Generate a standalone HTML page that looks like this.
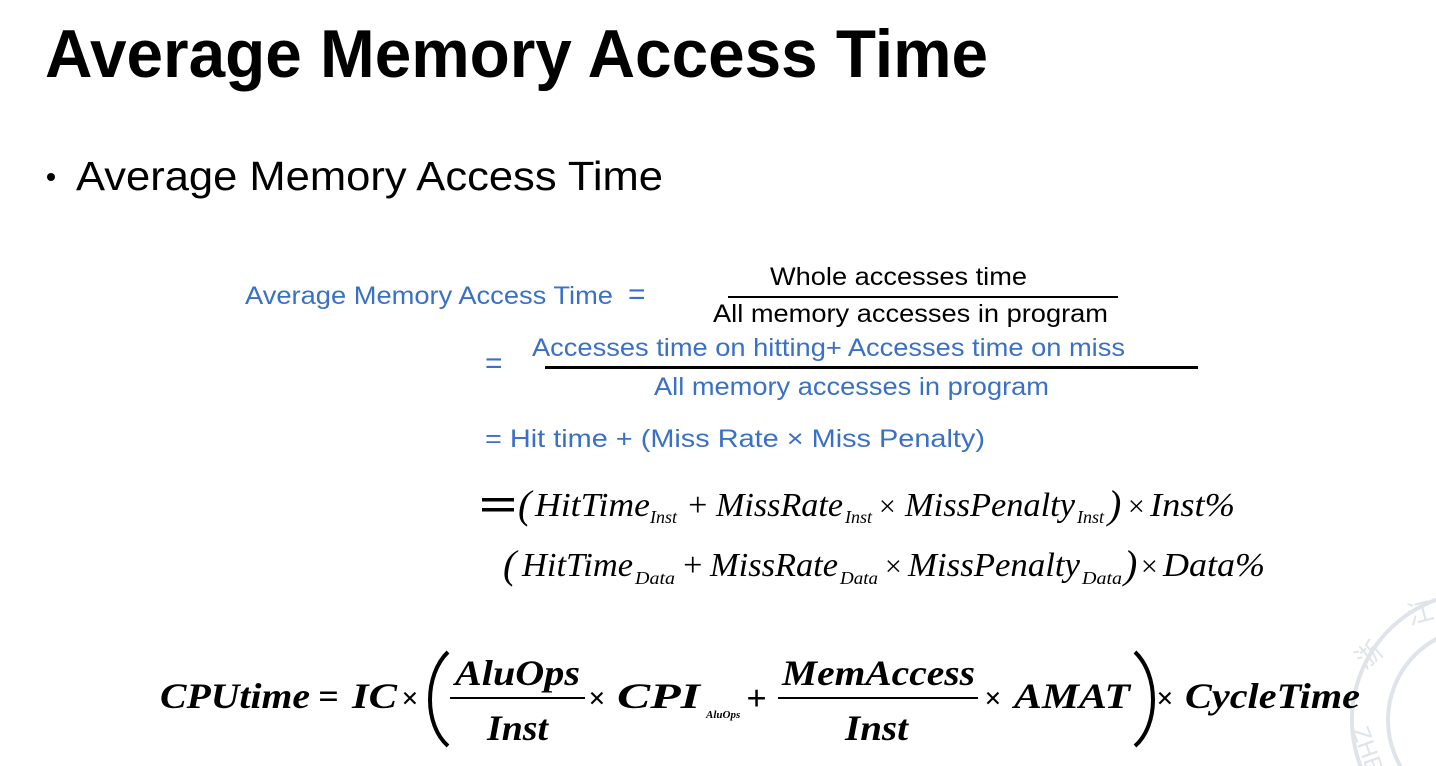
<!DOCTYPE html>
<html><head><meta charset="utf-8"><style>
html,body{margin:0;padding:0;background:#fff;width:1436px;height:766px;overflow:hidden}
svg{display:block}
.t{font-family:"Liberation Sans",sans-serif}
.b{fill:#3a70c6}
.m{font-family:"Liberation Serif",serif;font-style:italic}
.mb{font-family:"Liberation Serif",serif;font-style:italic;font-weight:bold}
</style></head><body>
<svg width="1436" height="766" viewBox="0 0 1436 766" xmlns="http://www.w3.org/2000/svg">
<g fill="none" stroke="#dfe3ea" stroke-width="4">
<circle cx="1480" cy="720" r="128"/>
<circle cx="1480" cy="720" r="92"/>
</g>
<g fill="#dfe3ea" font-family="Liberation Sans,sans-serif">
<text x="1365" y="670" font-size="26" transform="rotate(-40 1365 670)">浙</text>
<text x="1410" y="625" font-size="26" transform="rotate(-15 1410 625)">江</text>
<text x="1352" y="730" font-size="24" transform="rotate(70 1352 730)">ZHE</text>
</g>

<text class="t" x="45" y="77" font-size="68" font-weight="bold" textLength="943" lengthAdjust="spacingAndGlyphs">Average Memory Access Time</text>
<circle cx="51" cy="177" r="4" fill="#000"/>
<text class="t" x="76" y="190" font-size="41" textLength="587" lengthAdjust="spacingAndGlyphs">Average Memory Access Time</text>

<text class="t b" x="245" y="304" font-size="25" textLength="368" lengthAdjust="spacingAndGlyphs">Average Memory Access Time</text>
<text class="t b" x="628" y="304" font-size="30">=</text>
<text class="t" x="770" y="285" font-size="25" textLength="257" lengthAdjust="spacingAndGlyphs">Whole accesses time</text>
<rect x="728" y="296" width="390" height="2" fill="#000"/>
<text class="t" x="713" y="322" font-size="25" textLength="395" lengthAdjust="spacingAndGlyphs">All memory accesses in program</text>

<text class="t b" x="485" y="373" font-size="30">=</text>
<text class="t b" x="532" y="356" font-size="25" textLength="593" lengthAdjust="spacingAndGlyphs">Accesses time on hitting+ Accesses time on miss</text>
<rect x="545" y="366" width="653" height="3" fill="#000"/>
<text class="t b" x="654" y="395" font-size="25" textLength="395" lengthAdjust="spacingAndGlyphs">All memory accesses in program</text>

<text class="t b" x="485" y="447" font-size="25" textLength="500" lengthAdjust="spacingAndGlyphs">= Hit time + (Miss Rate × Miss Penalty)</text>

<rect x="482" y="498" width="32" height="3.5" fill="#000"/>
<rect x="482" y="508" width="32" height="3.5" fill="#000"/>
<g font-size="34">
<text class="m" x="518" y="518" font-style="normal" font-size="40">(</text>
<text class="m" x="535" y="516" textLength="115" lengthAdjust="spacingAndGlyphs">HitTime</text>
<text class="m" x="650" y="523" font-size="18">Inst</text>
<text class="m" x="686" y="516" font-style="normal">+</text>
<text class="m" x="716" y="516" textLength="127" lengthAdjust="spacingAndGlyphs">MissRate</text>
<text class="m" x="845" y="523" font-size="18">Inst</text>
<text class="m" x="877" y="516" font-style="normal" font-size="30">×</text>
<text class="m" x="905" y="516" textLength="170" lengthAdjust="spacingAndGlyphs">MissPenalty</text>
<text class="m" x="1077" y="523" font-size="18">Inst</text>
<text class="m" x="1108" y="518" font-style="normal" font-size="40">)</text>
<text class="m" x="1126" y="516" font-style="normal" font-size="30">×</text>
<text class="m" x="1150" y="516" textLength="85" lengthAdjust="spacingAndGlyphs">Inst%</text>
</g>
<g font-size="34">
<text class="m" x="503" y="578" font-style="normal" font-size="40">(</text>
<text class="m" x="522" y="576" textLength="111" lengthAdjust="spacingAndGlyphs">HitTime</text>
<text class="m" x="635" y="584" font-size="18" textLength="40" lengthAdjust="spacingAndGlyphs">Data</text>
<text class="m" x="681" y="576" font-style="normal">+</text>
<text class="m" x="710" y="576" textLength="128" lengthAdjust="spacingAndGlyphs">MissRate</text>
<text class="m" x="840" y="584" font-size="18" textLength="38" lengthAdjust="spacingAndGlyphs">Data</text>
<text class="m" x="883" y="576" font-style="normal" font-size="30">×</text>
<text class="m" x="908" y="576" textLength="172" lengthAdjust="spacingAndGlyphs">MissPenalty</text>
<text class="m" x="1082" y="584" font-size="18" textLength="40" lengthAdjust="spacingAndGlyphs">Data</text>
<text class="m" x="1124" y="578" font-style="normal" font-size="40">)</text>
<text class="m" x="1139" y="576" font-style="normal" font-size="30">×</text>
<text class="m" x="1163" y="576" textLength="102" lengthAdjust="spacingAndGlyphs">Data%</text>
</g>

<g font-size="36">
<text class="mb" x="160" y="708" textLength="150" lengthAdjust="spacingAndGlyphs">CPUtime</text>
<text class="mb" x="318" y="708" font-style="normal">=</text>
<text class="mb" x="352" y="708" textLength="45" lengthAdjust="spacingAndGlyphs">IC</text>
<text class="mb" x="401" y="708" font-style="normal" font-size="30">×</text>
<path d="M448 652 C424 675 424 725 448 746" fill="none" stroke="#000" stroke-width="4"/>
<text class="mb" x="455" y="685" textLength="125" lengthAdjust="spacingAndGlyphs">AluOps</text>
<rect x="450" y="697" width="135" height="2" fill="#000"/>
<text class="mb" x="487" y="740" textLength="61" lengthAdjust="spacingAndGlyphs">Inst</text>
<text class="mb" x="588" y="708" font-style="normal" font-size="30">×</text>
<text class="mb" x="617" y="708" textLength="83" lengthAdjust="spacingAndGlyphs">CPI</text>
<text class="mb" x="706" y="718" font-size="11">AluOps</text>
<text class="mb" x="746" y="710" font-style="normal">+</text>
<text class="mb" x="782" y="685" textLength="193" lengthAdjust="spacingAndGlyphs">MemAccess</text>
<rect x="778" y="697" width="200" height="2" fill="#000"/>
<text class="mb" x="845" y="740" textLength="63" lengthAdjust="spacingAndGlyphs">Inst</text>
<text class="mb" x="984" y="708" font-style="normal" font-size="30">×</text>
<text class="mb" x="1014" y="708" textLength="116" lengthAdjust="spacingAndGlyphs">AMAT</text>
<path d="M1135 652 C1159 675 1159 725 1135 746" fill="none" stroke="#000" stroke-width="4"/>
<text class="mb" x="1156" y="708" font-style="normal" font-size="30">×</text>
<text class="mb" x="1185" y="708" textLength="175" lengthAdjust="spacingAndGlyphs">CycleTime</text>
</g>
</svg>
</body></html>
